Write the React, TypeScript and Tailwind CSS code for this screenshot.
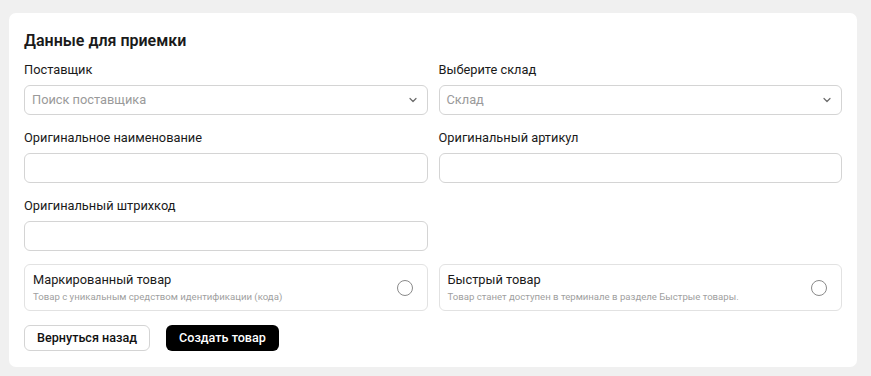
import React from "react";

function Chevron() {
  return (
    <svg width="10" height="10" viewBox="0 0 10 10" fill="none" className="shrink-0">
      <path d="M2 3.5 L5 6.5 L8 3.5" stroke="#6b6b6b" strokeWidth="1.2" strokeLinecap="round" strokeLinejoin="round" />
    </svg>
  );
}

function SelectBox({ placeholder }: { placeholder: string }) {
  return (
    <div className="h-[30px] rounded-[6px] border border-[#d4d4d4] bg-white flex items-center justify-between pl-[7px] pr-[9px]">
      <span className="text-[12.8px] text-[#9a9a9a]">{placeholder}</span>
      <Chevron />
    </div>
  );
}

function InputBox() {
  return <div className="h-[30px] rounded-[6px] border border-[#d4d4d4] bg-white" />;
}

function Field({ label, children }: { label: string; children: React.ReactNode }) {
  return (
    <div className="flex flex-col">
      <div className="text-[12.8px] leading-[16px] text-[#1a1a1a] mb-[7px]">{label}</div>
      {children}
    </div>
  );
}

function CheckCard({ title, sub }: { title: string; sub: string }) {
  return (
    <div className="h-[47px] rounded-[6px] border border-[#e2e2e2] bg-white flex items-center justify-between pl-[8px] pr-[14px]">
      <div className="flex flex-col">
        <span className="text-[12.8px] leading-[16px] text-[#1a1a1a]">{title}</span>
        <span className="text-[9.6px] leading-[14px] text-[#a0a0a0] mt-[2px]">{sub}</span>
      </div>
      <div className="w-[16px] h-[16px] rounded-full border border-[#8a8a8a] bg-white" />
    </div>
  );
}

export default function App() {
  return (
    <div className="w-[871px] h-[376px] bg-[#f0f0f0] pt-[13px] pl-[9px] pr-[14px]" style={{ fontFamily: "Roboto, 'Noto Sans', sans-serif" }}>
      <div className="bg-white rounded-[7px] px-[15px] pt-[18px] pb-[16px]">
        <div className="text-[16px] leading-[20px] font-semibold text-[#1a1a1a] mb-[11px]">Данные для приемки</div>
        <div className="grid grid-cols-2 gap-x-[11px] gap-y-[15px]">
          <Field label="Поставщик">
            <SelectBox placeholder="Поиск поставщика" />
          </Field>
          <Field label="Выберите склад">
            <SelectBox placeholder="Склад" />
          </Field>
          <Field label="Оригинальное наименование">
            <InputBox />
          </Field>
          <Field label="Оригинальный артикул">
            <InputBox />
          </Field>
          <Field label="Оригинальный штрихкод">
            <InputBox />
          </Field>
          <div />
        </div>
        <div className="grid grid-cols-2 gap-x-[11px] mt-[13px]">
          <CheckCard title="Маркированный товар" sub="Товар с уникальным средством идентификации (кода)" />
          <CheckCard title="Быстрый товар" sub="Товар станет доступен в терминале в разделе Быстрые товары." />
        </div>
        <div className="flex gap-[16px] mt-[14px]">
          <button className="h-[26px] px-[12px] rounded-[6px] border border-[#d4d4d4] bg-white text-[12.6px] font-medium text-[#111]">Вернуться назад</button>
          <button className="h-[26px] px-[13px] rounded-[6px] bg-black text-[12.6px] font-medium text-white">Создать товар</button>
        </div>
      </div>
    </div>
  );
}
